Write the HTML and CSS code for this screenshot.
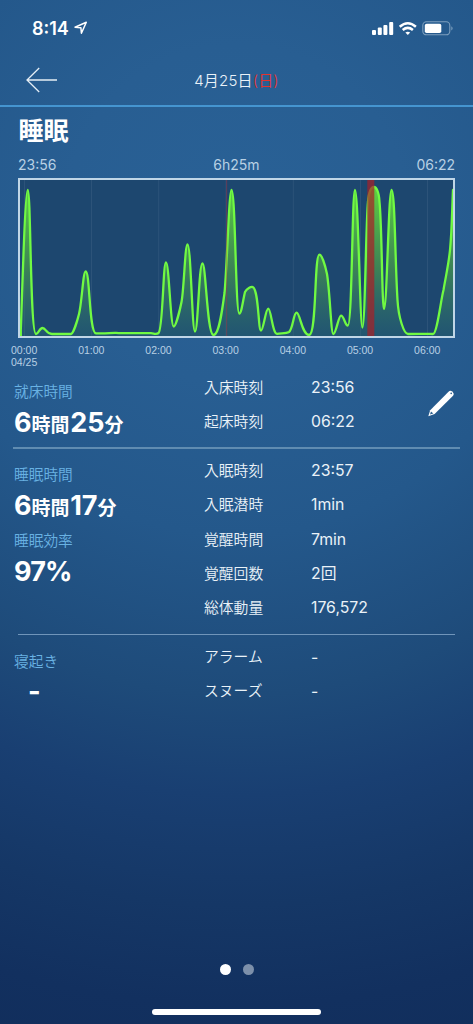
FILE: index.html
```html
<!DOCTYPE html>
<html lang="ja">
<head>
<meta charset="utf-8">
<title>睡眠</title>
<link rel="stylesheet" href="styles.css">
</head>
<body>
<div class="screen">
  <header class="status">
    <span class="clock">8:14</span>
    <svg class="location" width="14" height="14" viewBox="0 0 14 14"><path d="M1 6.2 12.3 1.3 7.4 12.3 6.9 6.8Z" fill="none" stroke="#fff" stroke-width="1.5" stroke-linejoin="round"/></svg>
    <svg class="indicators" width="82" height="16" viewBox="0 0 82 16">
      <g fill="#fff">
        <rect x="0" y="9" width="4" height="5" rx="1"/><rect x="5.8" y="6.5" width="4" height="7.5" rx="1"/><rect x="11.4" y="4" width="4" height="10" rx="1"/><rect x="17.2" y="1" width="4" height="13" rx="1"/>
        <path d="M35.8 14 33.4 11.6Q35.8 9.7 38.2 11.6Z"/>
      </g>
      <path d="M27.7 5.8Q35.8-1.2 43.9 5.8M30.7 9Q35.8 4.7 40.9 9" fill="none" stroke="#fff" stroke-width="2.5"/>
      <rect x="50.8" y=".8" width="27" height="13" rx="3.6" fill="none" stroke="#7d9fbe" stroke-width="1.1"/>
      <rect x="52.8" y="2.7" width="16.5" height="9.3" rx="1.8" fill="#fff"/>
      <path d="M79.3 5.2Q82 7.3 79.3 9.4Z" fill="#7d9fbe"/>
    </svg>
  </header>
  <nav class="nav">
    <svg class="back" width="32" height="26" viewBox="0 0 32 26"><path d="M13.2 1 1 13 13.2 25M1 13H31" fill="none" stroke="#e5eef5" stroke-width="1.3"/></svg>
    <div class="date">4月25日<span class="sunday">(日)</span></div>
  </nav>
  <h1 class="title">睡眠</h1>
  <div class="range"><span>23:56</span><span>6h25m</span><span>06:22</span></div>
  <svg class="chart" width="437" height="160" viewBox="18 178 437 160">
    <defs>
      <linearGradient id="fill" gradientUnits="userSpaceOnUse" x1="0" y1="187" x2="0" y2="336">
        <stop offset="0" stop-color="#63d93f" stop-opacity=".95"/><stop offset=".55" stop-color="#439150" stop-opacity=".8"/><stop offset="1" stop-color="#2b7075" stop-opacity=".35"/>
      </linearGradient>
      <clipPath id="plot"><rect x="20" y="180" width="433" height="156"/></clipPath>
    </defs>
    <rect x="19" y="179" width="435" height="158" fill="#1d476f"/>
    <path d="M24.5 180V336M91.5 180V336M158.7 180V336M226 180V336M293.3 180V336M360.5 180V336M427.5 180V336" stroke="#2c5379"/>
    <g clip-path="url(#plot)">
      <path fill="url(#fill)" stroke="#70fa42" stroke-width="2.3" stroke-linejoin="round" d="M20.8 340V330C22 300 25 190 27.7 190C31 190 30 334 36 334C38.5 334 39.5 328 42.5 328C46 328 46 334 52 334H71C73 334 77 322 79 314C82 302 83 271.5 85.7 271.5C90 271.5 89 333 96 333.3C105 334 111 332.6 116 332.8C124 333.4 140 333 151 333.2C154 333.3 156 335 158.5 333C163 330 163 262.5 166 262.5C169 262.5 170.5 326.5 173.7 326.5C176 326.5 180.5 307 181.5 302C184 290 185 244.5 187.5 244.5C191 244.5 192 331.5 195 331.5C198 331.5 199 263.5 202.4 263.5C206 263.5 207 335 213.5 335C219 335 222 312 224.5 293C227 268 229 190 231.5 190C235.5 190 235.5 313.5 239.3 313.5C241.5 313.5 243 300 245 292C247 288 251 286.8 252 286.8C259 286.8 258 330.5 261 330.5C263.5 330.5 265.5 308.7 268.3 308.7C271 308.7 272.5 333.8 277 333.8C281 333 286 333.6 289 332C293 329 293.5 312.7 296.6 312.7C300 312.7 302 335 309 335C317 335 314 254.7 319.5 254.7C322 254.7 325.5 267 327 274C330 292 331 334 333.3 334C336 334 338.5 315.7 341 315.7C344 315.7 345 325.5 347.8 325.5C352.3 325.5 352 190 355 190C358.2 190 360 327.5 362.4 327.5C365 327.5 366 220 368 202C369 190 371.5 187 374 187C376 187 379 191 379.5 202C382 225 382 309 384 309C387 309 388.5 190 391.5 190C395 190 395 260 397.5 300C398.5 318 404 334 408 334C420 333.5 430 334 433 334C437 334 441 299 443.5 290C446 275 448.5 265 450 250C452 230 452 210 453 190L456 190V340Z"/>
      <path d="M226.7 180V336" stroke="#c02630" stroke-opacity=".42"/>
      <rect x="367.3" y="180" width="7" height="156" fill="#a92027" fill-opacity=".7"/>
    </g>
    <rect x="19" y="179" width="435" height="158" fill="none" stroke="#c0d6e7" stroke-width="2"/>
  </svg>
  <div class="ticks"><span>00:00<br>04/25</span><span>01:00</span><span>02:00</span><span>03:00</span><span>04:00</span><span>05:00</span><span>06:00</span></div>

  <section class="section bed">
    <div class="summary"><div class="label">就床時間</div><div class="value">6<small>時間</small>25<small>分</small></div></div>
    <dl class="details"><dt>入床時刻</dt><dd>23:56</dd><dt>起床時刻</dt><dd>06:22</dd></dl>
    <svg class="edit" width="26" height="27" viewBox="0 0 26 27"><path d="M.3 26.2 2.2 20.2 20.5 1.7Q22.3 0 24.2 1.5L25 2.4Q26.5 4.2 24.8 6.1L6.6 24.1Z" fill="#fff"/><path d="m2 24.4 1-3 2.3 2.2Z" fill="#285e90"/><circle cx="23.2" cy="3.4" r=".8" fill="#285e90"/></svg>
  </section>
  <div class="rule thick"></div>
  <section class="section sleep">
    <div class="summary"><div class="label">睡眠時間</div><div class="value">6<small>時間</small>17<small>分</small></div><div class="label second">睡眠効率</div><div class="value percent">97%</div></div>
    <dl class="details"><dt>入眠時刻</dt><dd>23:57</dd><dt>入眠潜時</dt><dd>1min</dd><dt>覚醒時間</dt><dd>7min</dd><dt>覚醒回数</dt><dd>2回</dd><dt>総体動量</dt><dd>176,572</dd></dl>
  </section>
  <div class="rule"></div>
  <section class="section wake">
    <div class="summary"><div class="label">寝起き</div><div class="value none">-</div></div>
    <dl class="details"><dt>アラーム</dt><dd>-</dd><dt>スヌーズ</dt><dd>-</dd></dl>
  </section>
  <footer class="footer">
    <div class="dots"><i class="dot active"></i><i class="dot"></i></div>
    <div class="home"></div>
  </footer>
</div>
</body>
</html>
```
FILE: styles.css
```css
* { box-sizing: border-box; }
body { margin: 0; }
.screen {
  width: 473px; height: 1024px; overflow: hidden;
  display: flex; flex-direction: column;
  color: #fff; font-family: Inter, "Noto Sans CJK JP", sans-serif;
  background: radial-gradient(circle at 50% 215px, #296196 0, #285e92 170px, #24588b 320px, #1e4b7a 480px, #193f72 580px, #153766 690px, #12305f 790px, #112e5c 860px);
}
.status { height: 56px; padding: 21px 19px 0 32px; display: flex; align-items: flex-start; }
.clock { font-size: 18px; font-weight: 600; line-height: 15px; width: 37.5px; white-space: nowrap; }
.location { margin: 0 0 0 4px; }
.indicators { margin-left: auto; }
.nav { height: 51px; margin-bottom: -1px; border-bottom: 2px solid #4595d0; display: grid; grid-template-columns: 90px 1fr 90px; align-items: center; }
.back { margin: -1px 0 0 26px; }
.date { text-align: center; font-size: 15px; line-height: 24px; letter-spacing: .2px; color: #eaf2f8; }
.date, .label, dt { font-weight: 350; }
.sunday { color: #e3342f; }
.title { height: 48px; margin: 0; padding-left: 18.5px; font-size: 25px; line-height: 50px; font-weight: 700; }
.range { height: 24px; padding: 0 18px; display: grid; grid-template-columns: 1fr 1fr 1fr; font-size: 14px; line-height: 22px; color: #b8d0e4; }
.range span:nth-child(2) { text-align: center; }
.range span:nth-child(3) { text-align: right; }
.chart { display: block; margin-left: 18px; flex: none; }
.ticks { height: 32px; padding-top: 6px; margin-left: -9.5px; display: grid; grid-template-columns: repeat(7, 67.2px); text-align: center; font: 10.5px/12px "Liberation Sans", sans-serif; color: #b8d0e4; }
.section { display: grid; grid-template-columns: 190px 224px 1fr; padding-left: 14px; flex: none; }
.bed { height: 77px; }
.sleep { height: 185px; padding-top: 4px; }
.wake { height: 78px; padding-top: 5px; }
.summary { padding-top: 11px; }
.label { height: 20px; font-size: 14.7px; line-height: 22px; color: #69b2e3; }
.label.second { margin-top: 4px; }
.value { height: 42px; font-size: 27px; line-height: 44px; font-weight: 700; white-space: nowrap; }
.value small { font-size: 18.9px; letter-spacing: 0; font-weight: 600; margin-right: .8px; }
.percent { letter-spacing: -.8px; }
.none { padding-left: 14px; line-height: 42px; }
.details { margin: 0; display: grid; grid-template-columns: 107px 1fr; grid-auto-rows: 34.3px; align-content: start; line-height: 36px; color: #eaf2f8; }
.wake .details { line-height: 35px; }
dt { font-size: 14.8px; }
dd { margin: 0; font-size: 15.8px; font-weight: 400; }
.edit { margin-top: 20px; }
.rule { height: 1px; margin: 0 18px; background: #7095ba; flex: none; }
.rule.thick { height: 2px; margin: 0 13px; background: #608cb1; }
.footer { margin-top: auto; padding-bottom: 9px; display: flex; flex-direction: column; align-items: center; gap: 34px; }
.dots { display: flex; gap: 12px; }
.dot { width: 11px; height: 11px; border-radius: 50%; background: #7d90aa; }
.dot.active { background: #fff; }
.home { width: 169px; height: 6px; border-radius: 3px; background: #fff; }
```
